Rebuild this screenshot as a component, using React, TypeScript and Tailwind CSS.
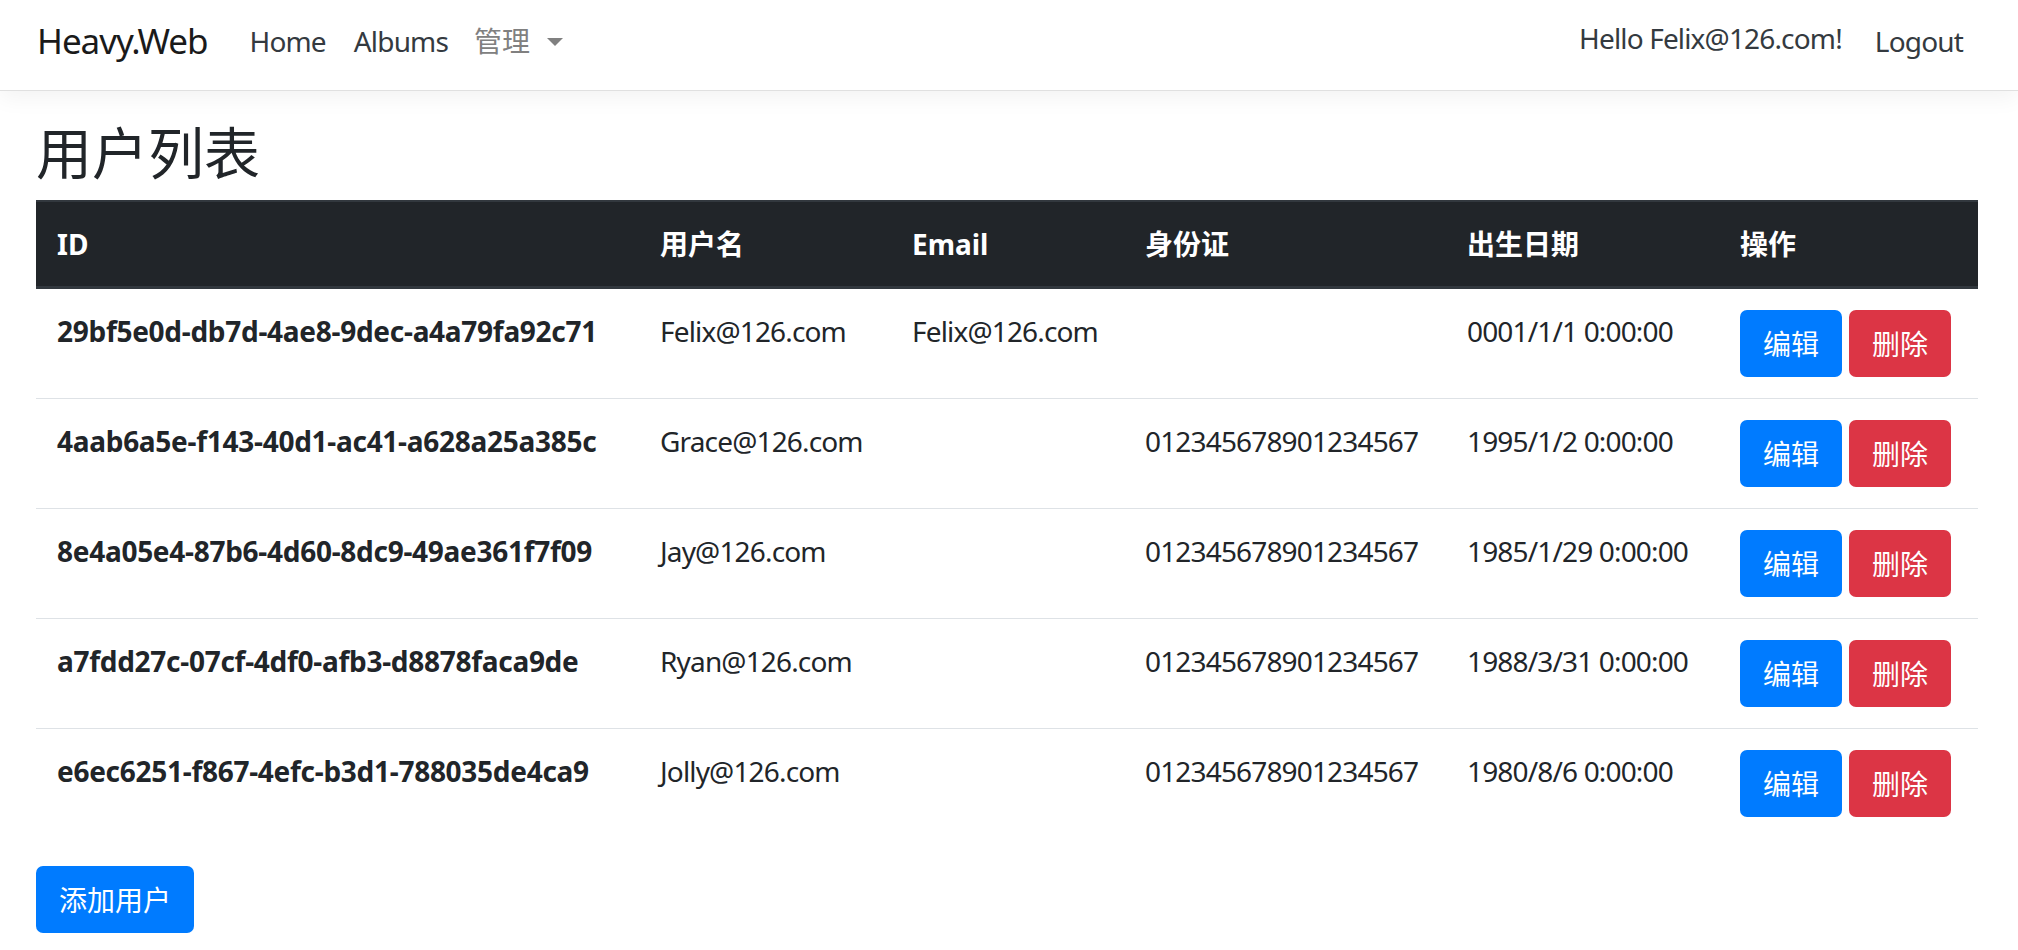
import React from "react";

type User = {
  id: string;
  name: string;
  email: string;
  idCard: string;
  birth: string;
};

const users: User[] = [
  { id: "29bf5e0d-db7d-4ae8-9dec-a4a79fa92c71", name: "Felix@126.com", email: "Felix@126.com", idCard: "", birth: "0001/1/1 0:00:00" },
  { id: "4aab6a5e-f143-40d1-ac41-a628a25a385c", name: "Grace@126.com", email: "", idCard: "012345678901234567", birth: "1995/1/2 0:00:00" },
  { id: "8e4a05e4-87b6-4d60-8dc9-49ae361f7f09", name: "Jay@126.com", email: "", idCard: "012345678901234567", birth: "1985/1/29 0:00:00" },
  { id: "a7fdd27c-07cf-4df0-afb3-d8878faca9de", name: "Ryan@126.com", email: "", idCard: "012345678901234567", birth: "1988/3/31 0:00:00" },
  { id: "e6ec6251-f867-4efc-b3d1-788035de4ca9", name: "Jolly@126.com", email: "", idCard: "012345678901234567", birth: "1980/8/6 0:00:00" },
];

const Navbar = () => (
  <nav className="flex h-[91px] items-center border-b border-[#e0e0e0] bg-white pb-[9px] pl-[37px] pr-[55px] shadow-[0_7px_21px_rgba(0,0,0,0.05)]">
    <a className="text-[35px] leading-[52px] tracking-[-0.03em] text-[#1a1a1a]">Heavy.Web</a>
    <a className="ml-[42px] text-[28px] leading-[42px] tracking-[-0.03em] text-[#343a40]">Home</a>
    <a className="ml-[28px] text-[28px] leading-[42px] tracking-[-0.03em] text-[#343a40]">Albums</a>
    <a className="ml-[26px] flex items-center text-[28px] leading-[42px] text-[#808080]">
      管理
      <span className="ml-[17px] mt-[2px] h-0 w-0 border-x-[8px] border-t-[8px] border-x-transparent border-t-[#808080]" />
    </a>
    <div className="ml-auto flex items-center gap-[33px]">
      <span className="mb-[5px] text-[28px] leading-[42px] tracking-[-0.03em] text-[#343a40]">Hello Felix@126.com!</span>
      <a className="text-[28px] leading-[42px] tracking-[-0.03em] text-[#343a40]">Logout</a>
    </div>
  </nav>
);

const th = "border-t-2 border-b-[3px] border-[#32383e] p-[21px] text-left font-bold";

export default function App() {
  return (
    <div className="min-h-screen bg-white font-['Noto_Sans','Noto_Sans_CJK_SC',sans-serif] text-[#212529]">
      <Navbar />
      <main className="pl-[36px] pr-[40px]">
        <h2 className="mb-[14px] mt-[28px] text-[56px] font-normal leading-[1.2]">用户列表</h2>
        <table className="w-full table-fixed border-separate border-spacing-0 text-[28px] leading-[42px]">
          <colgroup>
            <col className="w-[603px]" />
            <col className="w-[252px]" />
            <col className="w-[233px]" />
            <col className="w-[322px]" />
            <col className="w-[273px]" />
            <col className="w-[259px]" />
          </colgroup>
          <thead>
            <tr className="bg-[#212529] text-white">
              <th className={th}>ID</th>
              <th className={th}>用户名</th>
              <th className={th}>Email</th>
              <th className={th}>身份证</th>
              <th className={th}>出生日期</th>
              <th className={th}>操作</th>
            </tr>
          </thead>
          <tbody>
            {users.map((u, i) => {
              const td = `p-[21px] align-top ${i > 0 ? "border-t border-[#dee2e6]" : ""}`;
              return (
                <tr key={u.id}>
                  <td className={`${td} font-bold whitespace-nowrap tracking-[-0.01em]`}>{u.id}</td>
                  <td className={`${td} tracking-[-0.03em]`}>{u.name}</td>
                  <td className={`${td} tracking-[-0.03em]`}>{u.email}</td>
                  <td className={`${td} tracking-[-0.03em]`}>{u.idCard}</td>
                  <td className={`${td} tracking-[-0.03em] whitespace-nowrap`}>{u.birth}</td>
                  <td className={`${td} whitespace-nowrap`}>
                    <div className="flex">
                      <button className="flex h-[67px] items-center rounded-[7px] bg-[#007bff] px-[23px] text-white">编辑</button>
                      <button className="ml-[7px] flex h-[67px] items-center rounded-[7px] bg-[#dc3545] px-[23px] text-white">删除</button>
                    </div>
                  </td>
                </tr>
              );
            })}
          </tbody>
        </table>
        <button className="mt-[28px] flex h-[67px] items-center rounded-[7px] bg-[#007bff] px-[23px] text-[28px] leading-[42px] text-white">
          添加用户
        </button>
      </main>
    </div>
  );
}
